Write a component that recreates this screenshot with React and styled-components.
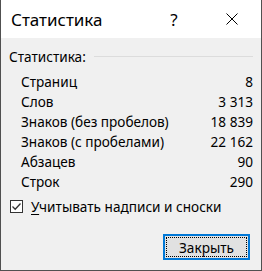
import React from "react";
import styled, { createGlobalStyle } from "styled-components";

const GlobalStyle = createGlobalStyle`
  html, body { margin: 0; padding: 0; background: #ffffff; }
  body { font-family: "Noto Sans", "Open Sans", sans-serif; }
  * { box-sizing: border-box; }
`;

const Window = styled.div`
  width: 262px;
  height: 271px;
  display: flex;
  flex-direction: column;
  border: 1px solid #505050;
  border-top: none;
  background: #f0f0f0;
  color: #000;
  font-family: "Noto Sans", "Open Sans", sans-serif;
  font-size: 13.6px;
`;

const TitleBar = styled.div`
  height: 38px;
  flex: none;
  background: #ffffff;
  display: flex;
  align-items: center;
  padding: 0 6px 0 10px;
`;

const Title = styled.div`
  flex: 1;
  font-size: 17px;
  color: #000;
`;

const TitleButton = styled.div`
  width: 46px;
  height: 38px;
  margin-right: ${(p) => p.$gap || 0}px;
  display: flex;
  align-items: center;
  justify-content: center;
  font-size: 17px;
  color: #000;
`;

const Body = styled.div`
  flex: 1;
  display: flex;
  flex-direction: column;
  padding: 10px 8px 0 8px;
`;

const GroupHeader = styled.div`
  display: flex;
  align-items: center;
  gap: 8px;
  height: 17px;
  line-height: 17px;
`;

const GroupLine = styled.div`
  flex: 1;
  height: 1px;
  background: #dcdcdc;
`;

const StatsGrid = styled.div`
  display: grid;
  grid-template-columns: 1fr auto;
  grid-auto-rows: 20px;
  align-items: center;
  padding: 7px 0 0 12px;
`;

const StatLabel = styled.div`
  line-height: 20px;
`;

const StatValue = styled.div`
  text-align: right;
  line-height: 20px;
`;

const CheckRow = styled.label`
  display: flex;
  align-items: center;
  gap: 8px;
  margin-top: 4px;
  height: 20px;
  padding-left: 1px;
`;

const CheckBox = styled.span`
  width: 13px;
  height: 13px;
  flex: none;
  border: 1px solid #333333;
  background: #ffffff;
  display: flex;
  align-items: center;
  justify-content: center;
`;

const Mnemonic = styled.span`
  text-decoration: underline;
  text-underline-offset: 2px;
`;

const ButtonRow = styled.div`
  display: flex;
  justify-content: flex-end;
  margin-top: 18px;
  padding-right: 3px;
`;

const Button = styled.button`
  width: 87px;
  height: 26px;
  border: 2px solid #0078d7;
  background: #e1e1e1;
  font-family: inherit;
  font-size: 13.6px;
  color: #000;
  display: flex;
  align-items: stretch;
  padding: 1px;
`;

const FocusRect = styled.span`
  flex: 1;
  border: 1px dotted #000;
  display: flex;
  align-items: center;
  justify-content: center;
`;

const stats = [
  ["Страниц", "8"],
  ["Слов", "3 313"],
  ["Знаков (без пробелов)", "18 839"],
  ["Знаков (с пробелами)", "22 162"],
  ["Абзацев", "90"],
  ["Строк", "290"],
];

export default function App() {
  return (
    <>
      <GlobalStyle />
      <Window>
        <TitleBar>
          <Title>Статистика</Title>
          <TitleButton $gap={12}>?</TitleButton>
          <TitleButton>
            <svg width="12" height="12" viewBox="0 0 12 12">
              <path d="M0.5 0.5 L11.5 11.5 M11.5 0.5 L0.5 11.5" stroke="#000" strokeWidth="1" fill="none" />
            </svg>
          </TitleButton>
        </TitleBar>
        <Body>
          <GroupHeader>
            <span>Статистика:</span>
            <GroupLine />
          </GroupHeader>
          <StatsGrid>
            {stats.map(([l, v]) => (
              <React.Fragment key={l}>
                <StatLabel>{l}</StatLabel>
                <StatValue>{v}</StatValue>
              </React.Fragment>
            ))}
          </StatsGrid>
          <CheckRow>
            <CheckBox>
              <svg width="11" height="11" viewBox="0 0 11 11">
                <path d="M1.5 5.5 L4.2 8.2 L9.5 2.5" stroke="#333" strokeWidth="1.3" fill="none" />
              </svg>
            </CheckBox>
            <span>
              <Mnemonic>У</Mnemonic>читывать надписи и сноски
            </span>
          </CheckRow>
          <ButtonRow>
            <Button>
              <FocusRect>Закрыть</FocusRect>
            </Button>
          </ButtonRow>
        </Body>
      </Window>
    </>
  );
}
